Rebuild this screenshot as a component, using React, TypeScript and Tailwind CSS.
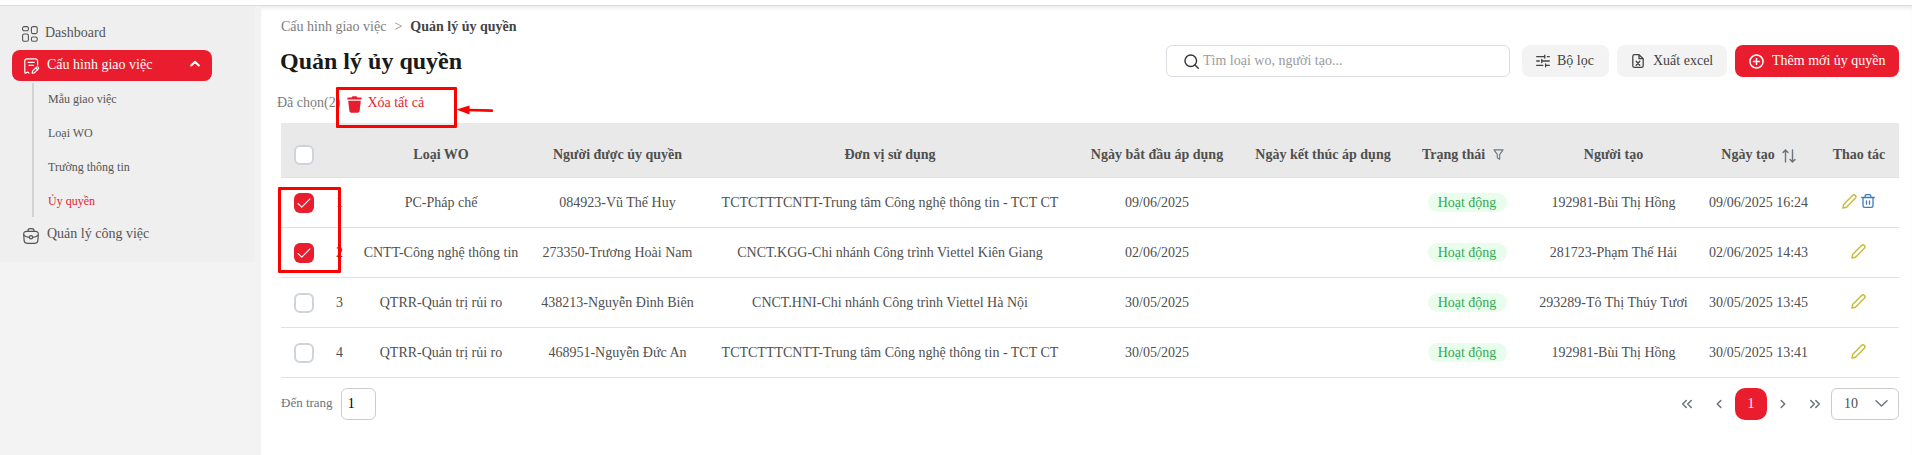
import type { ReactNode } from "react";

const rows = [
  {
    type: "PC-Pháp chế",
    user: "084923-Vũ Thế Huy",
    unit: "TCTCTTTCNTT-Trung tâm Công nghệ thông tin - TCT CT",
    start: "09/06/2025",
    creator: "192981-Bùi Thị Hồng",
    created: "09/06/2025 16:24",
    checked: true,
    removable: true,
  },
  {
    type: "CNTT-Công nghệ thông tin",
    user: "273350-Trương Hoài Nam",
    unit: "CNCT.KGG-Chi nhánh Công trình Viettel Kiên Giang",
    start: "02/06/2025",
    creator: "281723-Phạm Thế Hải",
    created: "02/06/2025 14:43",
    checked: true,
    removable: false,
  },
  {
    type: "QTRR-Quản trị rủi ro",
    user: "438213-Nguyễn Đình Biên",
    unit: "CNCT.HNI-Chi nhánh Công trình Viettel Hà Nội",
    start: "30/05/2025",
    creator: "293289-Tô Thị Thúy Tươi",
    created: "30/05/2025 13:45",
    checked: false,
    removable: false,
  },
  {
    type: "QTRR-Quản trị rủi ro",
    user: "468951-Nguyễn Đức An",
    unit: "TCTCTTTCNTT-Trung tâm Công nghệ thông tin - TCT CT",
    start: "30/05/2025",
    creator: "192981-Bùi Thị Hồng",
    created: "30/05/2025 13:41",
    checked: false,
    removable: false,
  },
];

const Icon = ({
  className,
  box = "0 0 16 16",
  width = 1.2,
  children,
}: {
  className?: string;
  box?: string;
  width?: number;
  children: ReactNode;
}) => (
  <svg
    viewBox={box}
    fill="none"
    stroke="currentColor"
    strokeWidth={width}
    strokeLinecap="round"
    strokeLinejoin="round"
    className={`shrink-0 ${className ?? ""}`}
  >
    {children}
  </svg>
);

const Checkbox = ({ checked }: { checked?: boolean }) =>
  checked ? (
    <span className="flex size-5 items-center justify-center rounded-md bg-[#e91d2d] text-white">
      <Icon className="size-[14px]" box="0 0 14 14" width={1.1}>
        <path d="M1 7.5 4.8 11.2 13 2.8" />
      </Icon>
    </span>
  ) : (
    <span className="block size-5 rounded-md border-2 border-[#ced4da] bg-white" />
  );

const Sidebar = () => (
  <aside className="w-[261px] shrink-0 border-r-[6px] border-[#f2f2f2] bg-[#f3f3f3] text-sm text-[#555]">
    <nav className="h-[256px] bg-[#efefef] pt-[17px]">
      <div className="flex h-5 items-center pl-[22px]">
        <Icon className="mt-[2px] size-4" width={1.1}>
          <rect x="0.6" y="0.6" width="5.8" height="4.2" rx="1.5" />
          <rect x="9.4" y="0.6" width="5.8" height="7" rx="1.5" />
          <rect x="0.6" y="8" width="5.8" height="7.2" rx="1.5" />
          <rect x="9.4" y="11" width="5.8" height="4.2" rx="1.5" />
        </Icon>
        <span className="ml-[7px]">Dashboard</span>
      </div>
      <div className="mt-[7px] ml-3 flex h-[31px] w-[200px] items-center rounded-[8px] bg-[#e91d2d] pl-3 text-white">
        <Icon className="size-4">
          <path d="M13.6 7V3A2.2 2.2 0 0 0 11.4.8H3A2.2 2.2 0 0 0 .8 3v11.4c0 .8.6.9 1.2.5l1-.7c.4-.3.8-.2 1.1.1l.9.8" />
          <path d="M4.2 4.4h6M5 7.4h4.5M8.2 15.2l.4-2.2 3.9-3.9c.5-.5 1.2-.4 1.7.1s.6 1.2.1 1.7l-3.9 3.9ZM11.8 10l1.8 1.8" />
        </Icon>
        <span className="mb-px ml-[7px]">Cấu hình giao việc</span>
        <Icon className="mr-3 mb-1 ml-auto h-[7px] w-[10px]" box="0 0 10 7" width={2.1}>
          <path d="M1.2 5.5 5 1.8l3.8 3.7" />
        </Icon>
      </div>
      <div className="mt-0.5 ml-8 h-[134px] border-l-2 border-[#d3d3d3] pl-3.5 text-xs leading-[34px]">
        <div className="h-[33px] leading-8">Mẫu giao việc</div>
        <div>Loại WO</div>
        <div>Trường thông tin</div>
        <div className="text-[#e91d2d]">Ủy quyền</div>
      </div>
      <div className="mt-[7px] flex h-5 items-center pl-[23px]">
        <Icon className="mt-[3px] size-4">
          <path d="M5 3.4v-.6C5 1.5 5.7.7 7 .7h2c1.3 0 2 .8 2 2.1v.6" />
          <path d="M3.6 3.4h8.8c2 0 3 1 2.9 2.9l-.4 6c-.1 2-1 3-3 3H4.1c-2 0-2.9-1-3-3l-.4-6c-.1-1.9.9-2.9 2.9-2.9Z" />
          <path d="M.8 7.2c1.7 1.3 3.5 2 5.5 2.2M15.2 7.2c-1.7 1.3-3.5 2-5.5 2.2" />
          <circle cx="8" cy="9.3" r="1.6" />
        </Icon>
        <span className="ml-2">Quản lý công việc</span>
      </div>
    </nav>
  </aside>
);

const Toolbar = () => (
  <div className="flex h-8 items-center text-sm text-[#444]">
    <h1 className="-ml-px text-2xl font-bold text-[#1a1a1a]">Quản lý ủy quyền</h1>
    <div className="ml-auto flex h-8 w-[344px] items-center rounded-md border border-[#dcdce2] pl-[17px] text-[#9b9b9b]">
      <Icon className="size-[15px] text-[#333]" width={1.5}>
        <circle cx="7.2" cy="7.2" r="6.2" />
        <path d="m11.8 11.8 3.4 3.4" />
      </Icon>
      <span className="ml-1">Tìm loại wo, người tạo...</span>
    </div>
    <button className="ml-3 flex h-8 w-[87px] items-center rounded-[8px] bg-[#f3f3f3] pl-3.5">
      <Icon className="size-[14px]" width={1.5}>
        <path d="M.8 3h9M13 3h2.200M.8 8h3M6.800 8h8.400M.8 13h7M11 13h4.200M10 1.300v3.400M6.600 6.300v3.400M11 11.300v3.400" />
      </Icon>
      <span className="ml-[7px]">Bộ lọc</span>
    </button>
    <button className="ml-2 flex h-8 w-[110px] items-center rounded-[8px] bg-[#f3f3f3] pl-[15px]">
      <Icon className="h-[14px] w-3" box="0 0 12 14" width={1.3}>
        <path d="M7 .7H2.500C1.500.700.800 1.300.800 2.300v9.400c0 1 .7 1.600 1.700 1.600h7c1 0 1.700-.6 1.700-1.600V4.700ZM7 .7v4h4.200M4.200 7.200l3.600 4M7.800 7.200l-3.600 4" />
      </Icon>
      <span className="ml-[9px]">Xuất excel</span>
    </button>
    <button className="ml-2 flex h-8 w-[164px] items-center rounded-[8px] bg-[#e91d2d] pl-3.5 text-white">
      <Icon className="size-[15px]" width={1.6}>
        <circle cx="8" cy="8" r="7" />
        <path d="M8 4.800v6.400M4.800 8h6.400" />
      </Icon>
      <span className="ml-2">Thêm mới ủy quyền</span>
    </button>
  </div>
);

const Pencil = () => (
  <Icon className="size-[15px] text-[#c6bb38]" width={1.5}>
    <path d="m1 15 .7-3.900 9.500-9.500c1-1 2.300-.9 3.100-.1s.9 2.100-.1 3.100L4.800 14.200Z" />
  </Icon>
);

const Table = () => (
  <table className="w-[1618px] table-fixed border-collapse text-center text-sm whitespace-nowrap text-[#4f4f4f]">
    <colgroup>
      <col className="w-[44px]" />
      <col className="w-[29px]" />
      <col className="w-[174px]" />
      <col className="w-[179px]" />
      <col className="w-[366px]" />
      <col className="w-[168px]" />
      <col className="w-[164px]" />
      <col className="w-[124px]" />
      <col className="w-[169px]" />
      <col className="w-[121px]" />
      <col className="w-[80px]" />
    </colgroup>
    <thead>
      <tr className="h-[54px] border-b border-[#dfe1e7] bg-[#e9e9e9] *:pt-[10px]">
        <th className="pl-[13px]">
          <Checkbox />
        </th>
        <th />
        <th>Loại WO</th>
        <th>Người được ủy quyền</th>
        <th>Đơn vị sử dụng</th>
        <th>Ngày bắt đầu áp dụng</th>
        <th>Ngày kết thúc áp dụng</th>
        <th>
          <div className="flex items-center justify-center gap-2 pr-2">
            Trạng thái
            <Icon className="size-[11px] text-[#6c757d]" box="0 0 12 12" width={1.2}>
              <path d="M1 1h10L7.300 5.800v5.400L4.700 9.700V5.800Z" />
            </Icon>
          </div>
        </th>
        <th>Người tạo</th>
        <th>
          <div className="flex items-center justify-center gap-[7px]">
            Ngày tạo
            <Icon className="mt-[3px] size-[14px] text-[#6c757d]" box="0 0 14 14" width={1.4}>
              <path d="M3.500 13V1M1 3.600 3.500 1 6 3.600M10.500 1v12M8 10.400l2.500 2.600 2.500-2.600" />
            </Icon>
          </div>
        </th>
        <th>Thao tác</th>
      </tr>
    </thead>
    <tbody>
      {rows.map((row, index) => (
        <tr key={index} className="h-[50px] border-b border-[#dfe1e7] *:pt-px">
          <td className="pl-[13px]">
            <Checkbox checked={row.checked} />
          </td>
          <td>{index + 1}</td>
          <td>{row.type}</td>
          <td>{row.user}</td>
          <td>{row.unit}</td>
          <td>{row.start}</td>
          <td />
          <td>
            <span className="inline-flex h-[19px] w-[79px] items-center justify-center rounded-full bg-[#e8fdeb] text-[#34a853]">
              Hoạt động
            </span>
          </td>
          <td>{row.creator}</td>
          <td>{row.created}</td>
          <td>
            <div className="-mt-[3px] flex items-center justify-center gap-1 pr-0.5">
              <Pencil />
              {row.removable && (
                <Icon className="size-[14px] text-[#3e7bbd]" box="0 0 14 14" width={1.3}>
                  <path d="M.8 3.500h12.400M4.200 3.500V2c0-.8.500-1.300 1.300-1.300h3c.8 0 1.300.5 1.300 1.300v1.500M2 3.500v8.200c0 1 .6 1.600 1.600 1.600h6.800c1 0 1.600-.6 1.600-1.600V3.500M5.500 6.800v3.400M8.500 6.800v3.400" />
                </Icon>
              )}
            </div>
          </td>
        </tr>
      ))}
    </tbody>
  </table>
);

const PageArrow = ({ d }: { d: string }) => (
  <button className="flex size-8 items-center justify-center text-[#6c757d]">
    <Icon className="size-3" box="0 0 12 12" width={1.6}>
      <path d={d} />
    </Icon>
  </button>
);

const Pagination = () => (
  <div className="mt-[10px] flex h-8 items-center text-sm">
    <span className="text-[13px] text-[#6c757d]">Đến trang</span>
    <span className="ml-2 flex h-8 w-[35px] items-center rounded-md border border-[#ccc] pl-1.5 text-black">
      1
    </span>
    <div className="ml-auto flex items-center">
      <PageArrow d="M5.200 2.500 1.700 6l3.500 3.500M10.200 2.500 6.700 6l3.500 3.500" />
      <PageArrow d="M7.800 2.500 4.300 6l3.500 3.500" />
      <button className="size-8 rounded-[10px] bg-[#e91d2d] text-white">1</button>
      <PageArrow d="M4.200 2.500 7.700 6 4.200 9.500" />
      <PageArrow d="M1.800 2.500 5.300 6 1.800 9.500M6.800 2.500 10.300 6 6.800 9.500" />
      <div className="flex h-8 w-[68px] items-center rounded-md border border-[#ccc] pr-2.5 pl-3 text-[#4f4f4f]">
        10
        <Icon className="ml-auto h-[7px] w-[13px] text-[#6c757d]" box="0 0 13 7" width={1.5}>
          <path d="m1 .8 5.500 5.200L12 .8" />
        </Icon>
      </div>
    </div>
  </div>
);

export default function App() {
  return (
    <div className="relative flex h-[455px] w-[1912px] flex-col overflow-hidden bg-white font-['Liberation_Serif','Times_New_Roman',serif]">
      <header className="h-[5px] shrink-0" />
      <div className="flex flex-1 border-t border-[#dcdcdc]">
        <Sidebar />
        <main className="flex flex-1 flex-col pr-[13px] pl-5 shadow-[inset_0_4px_5px_-3px_rgba(0,0,0,0.12)]">
          <div className="mt-[13px] flex h-4 items-center text-sm leading-4 text-[#7d7d7d]">
            Cấu hình giao việc
            <span className="mx-2">&gt;</span>
            <span className="font-bold text-[#444]">Quản lý ủy quyền</span>
          </div>
          <div className="mt-[10px]">
            <Toolbar />
          </div>
          <div className="mt-[18px] -ml-1 flex h-4 items-center text-sm text-[#7d7d7d]">
            Đã chọn(2)
            <svg viewBox="0 0 15 17" fill="#e91d2d" className="mt-[3px] ml-[7px] h-[17px] w-[15px]">
              <path d="M4.500 1.500 5.600.3h3.800l1.100 1.200h3.200q1 0 1 1.200v.8H.3v-.8q0-1.200 1-1.200ZM1.200 4.800h12.600l-1.200 10.300q-.2 1.700-2 1.700H4.400q-1.800 0-2-1.700Z" />
            </svg>
            <span className="ml-[5px] text-[#e91d2d]">Xóa tất cả</span>
          </div>
          <div className="mt-3">
            <Table />
          </div>
          <Pagination />
        </main>
      </div>

      {/* markup drawn over the page */}
      <div className="absolute top-[87px] left-[336px] h-[41px] w-[121px] rounded-[1px] border-[3px] border-[#ff0000]" />
      <div className="absolute top-[187px] left-[278px] h-[86px] w-[63px] rounded-[1px] border-[3px] border-[#ff0000]" />
      <svg
        viewBox="0 0 37 10"
        className="absolute top-[105px] left-[456px] h-[10px] w-[37px]"
      >
        <path d="M12 5 36 5.600" stroke="#ff0000" strokeWidth="2.6" strokeLinecap="round" />
        <path d="M.5 4.500 13.500.6v8.800Z" fill="#ff0000" />
      </svg>
    </div>
  );
}
